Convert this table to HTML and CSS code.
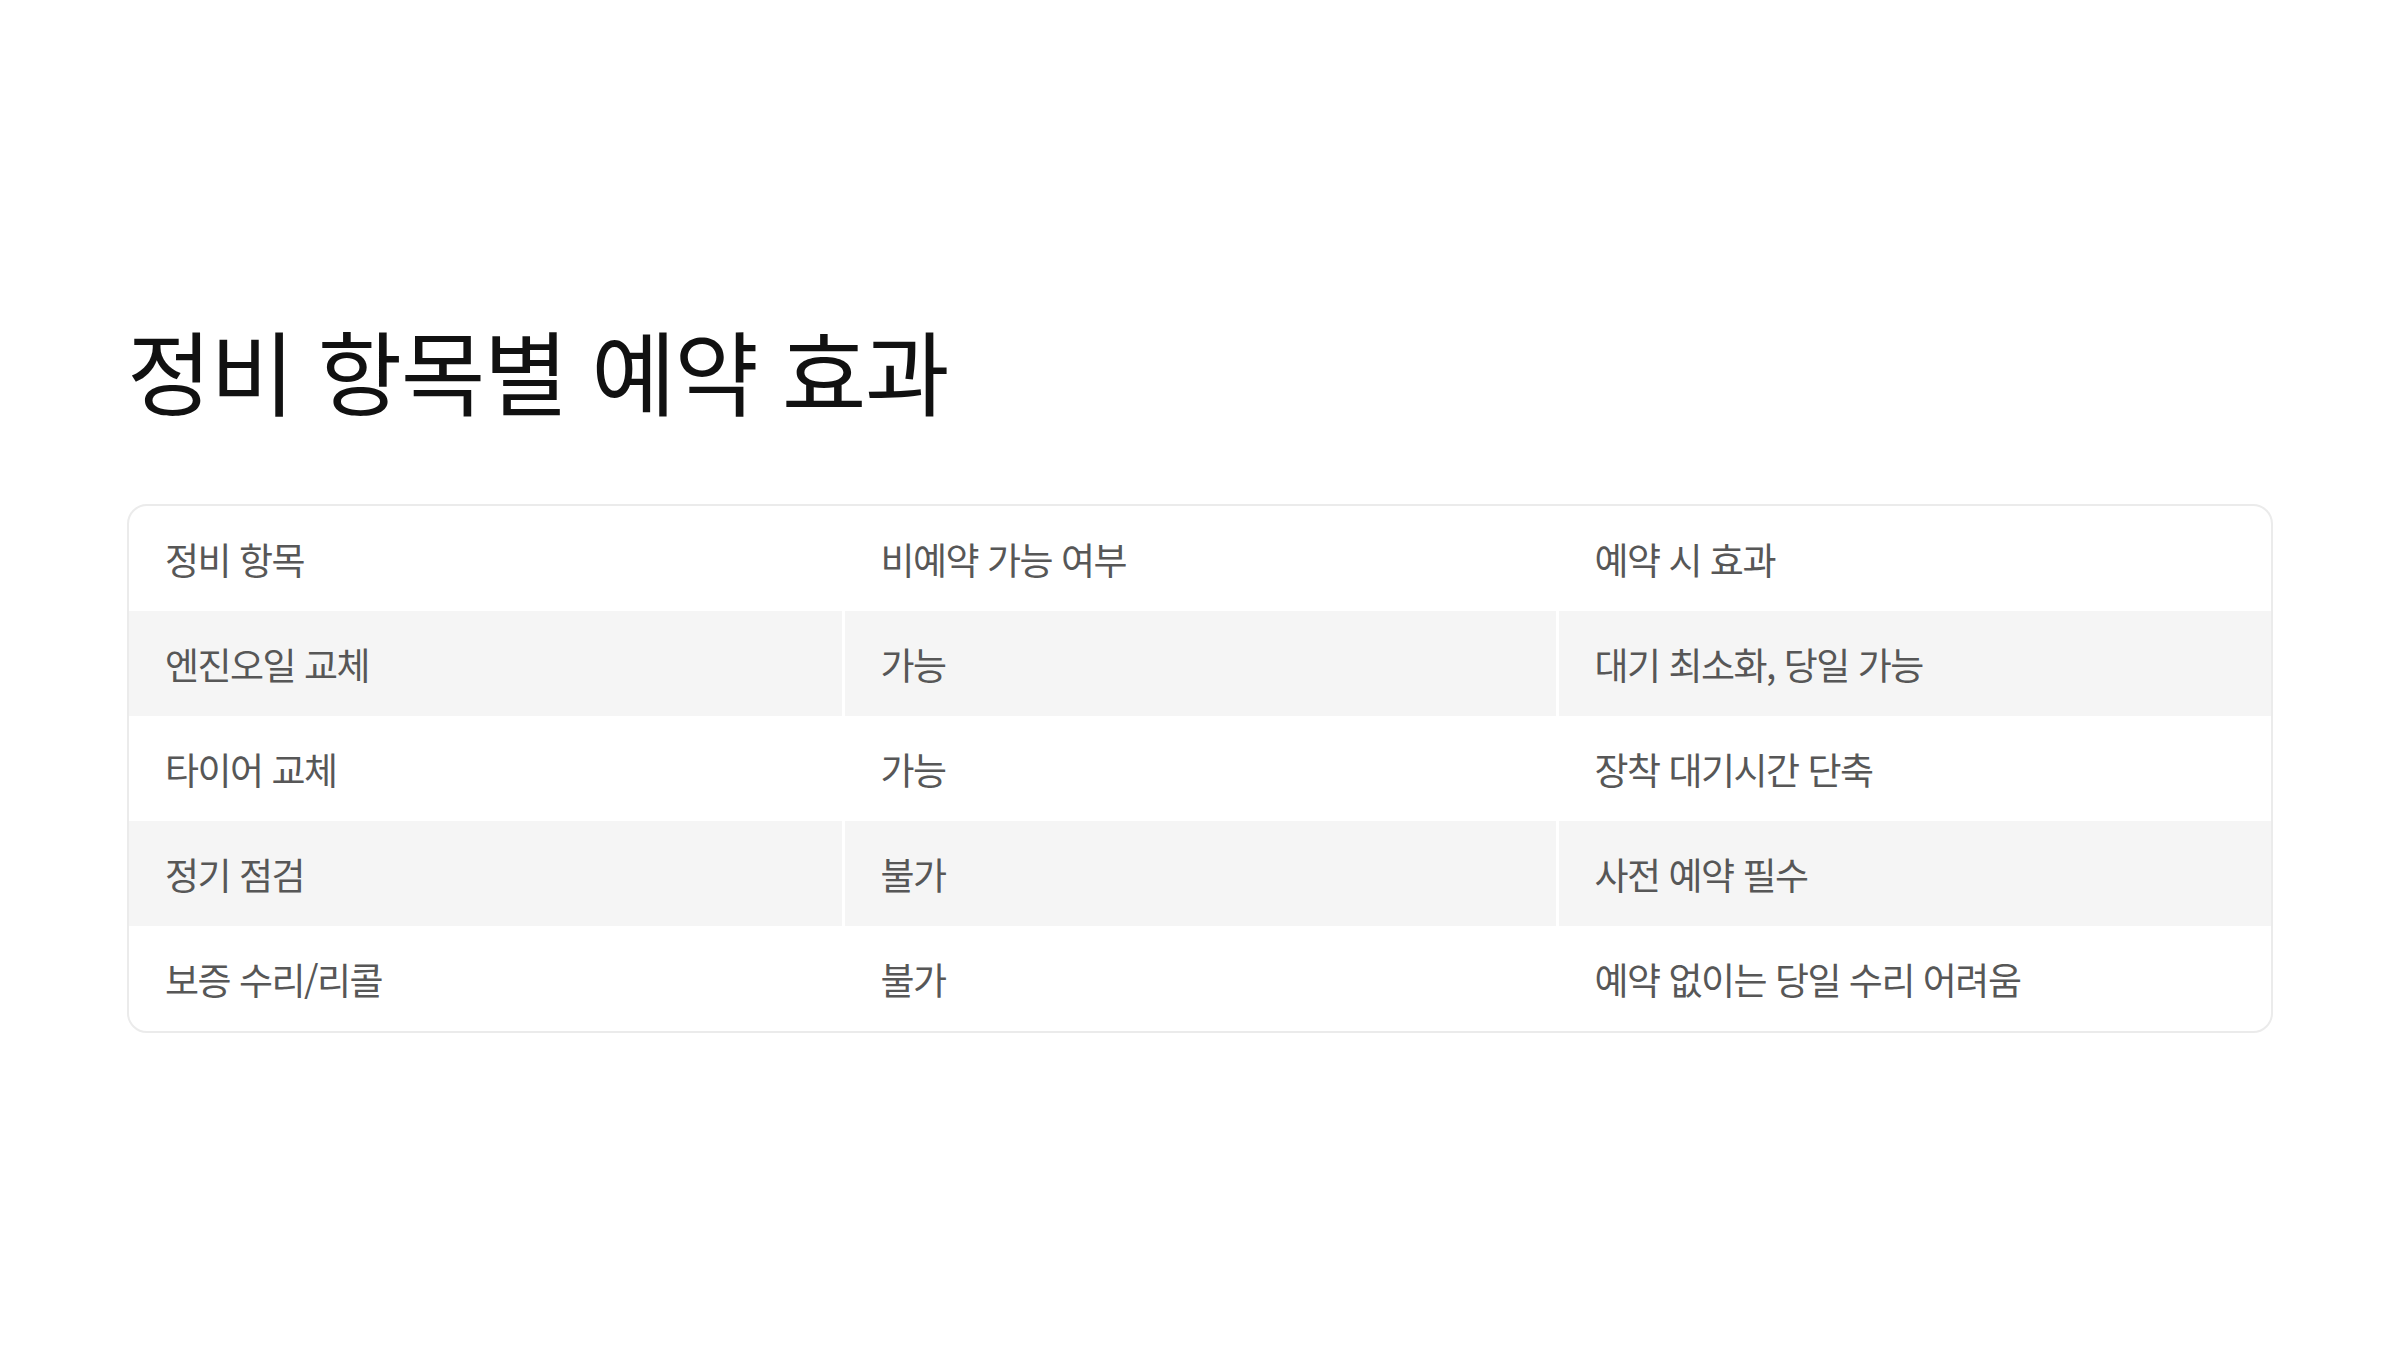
FILE: index.html
```html
<!DOCTYPE html>
<html lang="ko">
<head>
    <meta charset="UTF-8">
    <title>정비 항목별 예약 효과</title>
    <link rel="stylesheet" href="styles.css">
</head>
<body>
    <div class="slide">
        <h1 class="title">정비 항목별 예약 효과</h1>

        <div class="table-card">
            <table class="effect-table">
                <thead>
                    <tr>
                        <th>정비 항목</th>
                        <th>비예약 가능 여부</th>
                        <th>예약 시 효과</th>
                    </tr>
                </thead>
                <tbody>
                    <tr>
                        <td>엔진오일 교체</td>
                        <td>가능</td>
                        <td>대기 최소화, 당일 가능</td>
                    </tr>
                    <tr>
                        <td>타이어 교체</td>
                        <td>가능</td>
                        <td>장착 대기시간 단축</td>
                    </tr>
                    <tr>
                        <td>정기 점검</td>
                        <td>불가</td>
                        <td>사전 예약 필수</td>
                    </tr>
                    <tr>
                        <td>보증 수리/리콜</td>
                        <td>불가</td>
                        <td>예약 없이는 당일 수리 어려움</td>
                    </tr>
                </tbody>
            </table>
        </div>
    </div>
</body>
</html>
```

FILE: styles.css
```css
body {
    margin: 0;
    padding: 0;
    background-color: #fff;
    font-family: "Noto Sans CJK KR", "Noto Sans", sans-serif;
}

.slide {
    width: 2400px;
    height: 1350px;
    box-sizing: border-box;
    padding: 314px 127px 0 127px;
}

.title {
    margin: 0 0 80px 0;
    font-size: 92px;
    font-weight: 400;
    line-height: 110px;
    color: #111;
    letter-spacing: -1.5px;
}

.table-card {
    border: 2px solid #ebebeb;
    border-radius: 20px;
    overflow: hidden;
}

.effect-table {
    width: 100%;
    border-collapse: collapse;
    table-layout: fixed;
}

.effect-table th,
.effect-table td {
    height: 105px;
    padding: 0 36px;
    text-align: left;
    font-size: 37px;
    font-weight: 400;
    color: #575757;
    letter-spacing: -1.5px;
    border-right: 3px solid #fff;
}

.effect-table th:last-child,
.effect-table td:last-child {
    border-right: none;
}

.effect-table tbody tr:nth-child(odd) {
    background-color: #f5f5f5;
}
```
